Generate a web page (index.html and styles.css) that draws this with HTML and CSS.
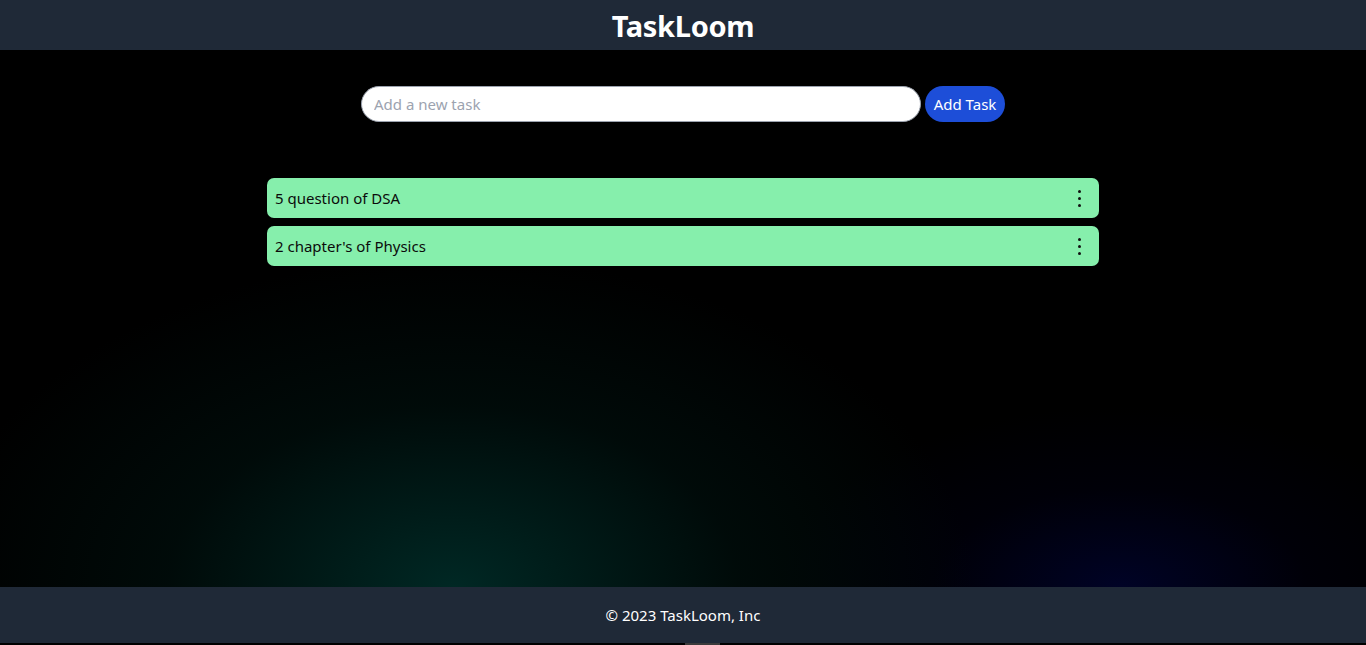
FILE: index.html
```html
<!DOCTYPE html>
<html lang="en">
<head>
<meta charset="utf-8">
<title>TaskLoom</title>
<link rel="stylesheet" href="styles.css">
</head>
<body>
<div class="page">
  <header class="topbar">
    <h1 class="brand">TaskLoom</h1>
  </header>
  <main class="main">
    <form class="add-row">
      <input class="task-input" type="text" placeholder="Add a new task">
      <button class="add-btn" type="button">Add Task</button>
    </form>
    <ul class="task-list">
      <li class="task">
        <span class="task-text">5 question of DSA</span>
        <span class="dots"><i></i><i></i><i></i></span>
      </li>
      <li class="task">
        <span class="task-text">2 chapter's of Physics</span>
        <span class="dots"><i></i><i></i><i></i></span>
      </li>
    </ul>
  </main>
  <footer class="footer">© 2023 TaskLoom, Inc</footer>
  <div class="bottom-strip"><span class="thumb"></span></div>
</div>
</body>
</html>
```
FILE: styles.css
```css
* { box-sizing: border-box; }
html, body { margin: 0; padding: 0; }
body {
  background: #000;
  font-family: "Noto Sans", "Open Sans", Arial, sans-serif;
  color: #fff;
  height: 645px;
  overflow: hidden;
}
.page {
  display: flex;
  flex-direction: column;
  height: 645px;
}
.topbar {
  background: #1f2937;
  height: 50px;
  display: flex;
  align-items: center;
  justify-content: center;
}
.brand {
  margin: 0;
  font-size: 29px;
  font-weight: 700;
  line-height: 1;
  color: #fff;
  letter-spacing: -0.3px;
}
.main {
  height: 537px;
  padding-top: 36px;
  background:
    radial-gradient(ellipse 520px 330px at 453px 100%, rgba(0, 42, 38, 0.95), rgba(0, 26, 22, 0.4) 55%, rgba(0, 0, 0, 0) 100%),
    radial-gradient(ellipse 340px 180px at 1120px 100%, rgba(0, 3, 40, 0.95), rgba(0, 0, 20, 0.4) 55%, rgba(0, 0, 0, 0) 100%),
    #000;
  display: flex;
  flex-direction: column;
  align-items: center;
}
.add-row {
  display: flex;
  gap: 4px;
  margin: 0 0 56px 0;
}
.task-input {
  width: 560px;
  height: 36px;
  border-radius: 18px;
  border: 1px solid #9ca3af;
  background: #fff;
  padding: 0 12px;
  font-family: inherit;
  font-size: 15px;
  color: #111;
  outline: none;
}
.task-input::placeholder { color: #9ca3af; }
.add-btn {
  width: 80px;
  height: 36px;
  border: none;
  border-radius: 18px;
  background: #1d4ed8;
  color: #fff;
  font-family: inherit;
  font-size: 15px;
  padding: 0;
}
.task-list {
  list-style: none;
  margin: 0;
  padding: 0;
  width: 832px;
  display: flex;
  flex-direction: column;
  gap: 8px;
}
.task {
  height: 40px;
  background: #86efac;
  border-radius: 7px;
  display: flex;
  align-items: center;
  justify-content: space-between;
  padding: 0 18px 0 8px;
  color: #0b0b0b;
  font-size: 15px;
}
.dots {
  display: flex;
  flex-direction: column;
  gap: 4px;
  margin-top: 1px;
}
.dots i {
  display: block;
  width: 3px;
  height: 3px;
  border-radius: 50%;
  background: #111;
}
.footer {
  background: #1f2937;
  height: 56px;
  display: flex;
  align-items: center;
  justify-content: center;
  font-size: 15px;
  color: #fff;
}
.bottom-strip {
  height: 2px;
  display: flex;
  justify-content: center;
  padding-left: 39px;
}
.thumb {
  width: 35px;
  height: 2px;
  background: #3a3a3a;
}
```
